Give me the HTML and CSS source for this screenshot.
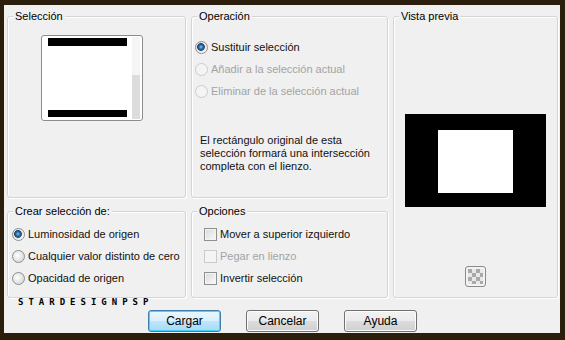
FILE: index.html
```html
<!DOCTYPE html>
<html lang="es">
<head>
    <meta charset="UTF-8">
    <title>Cargar selección desde canal alfa</title>
    <link rel="stylesheet" href="styles.css">
</head>
<body>
    <div class="dialog">
        <div class="groups">
            <fieldset class="box sel">
                <legend>Selección</legend>
                <div class="thumb">
                    <div class="thumb-img">
                        <div class="bar top"></div>
                        <div class="bar bottom"></div>
                    </div>
                    <div class="scroll"><div class="grip"></div></div>
                </div>
            </fieldset>

            <fieldset class="box op">
                <legend>Operación</legend>
                <div class="rows">
                    <label class="row"><span class="radio on"></span>Sustituir selección</label>
                    <label class="row off"><span class="radio"></span>Añadir a la selección actual</label>
                    <label class="row off"><span class="radio"></span>Eliminar de la selección actual</label>
                </div>
                <p class="note">El rectángulo original de esta selección formará una intersección completa con el lienzo.</p>
            </fieldset>

            <fieldset class="box preview">
                <legend>Vista previa</legend>
                <div class="canvas"><div class="inner"></div></div>
                <div class="checker">
                    <svg width="15" height="15" viewBox="0 0 15 15">
                        <rect width="15" height="15" fill="#e8e8e8"/>
                        <g fill="#a9a9a9">
                            <rect x="0" y="0" width="4" height="4"/><rect x="8" y="0" width="4" height="4"/>
                            <rect x="4" y="4" width="4" height="4"/><rect x="12" y="4" width="3" height="4"/>
                            <rect x="0" y="8" width="4" height="4"/><rect x="8" y="8" width="4" height="4"/>
                            <rect x="4" y="12" width="4" height="3"/><rect x="12" y="12" width="3" height="3"/>
                        </g>
                    </svg>
                </div>
            </fieldset>

            <fieldset class="box crear">
                <legend>Crear selección de:</legend>
                <div class="rows">
                    <label class="row"><span class="radio on"></span>Luminosidad de origen</label>
                    <label class="row"><span class="radio"></span>Cualquier valor distinto de cero</label>
                    <label class="row"><span class="radio"></span>Opacidad de origen</label>
                </div>
            </fieldset>

            <fieldset class="box opts">
                <legend>Opciones</legend>
                <div class="rows">
                    <label class="row"><span class="check"></span>Mover a superior izquierdo</label>
                    <label class="row off"><span class="check"></span>Pegar en lienzo</label>
                    <label class="row"><span class="check"></span>Invertir selección</label>
                </div>
            </fieldset>
        </div>

        <div class="buttons">
            <button class="btn default">Cargar</button>
            <button class="btn">Cancelar</button>
            <button class="btn">Ayuda</button>
        </div>

        <div class="stamp">STARDESIGNPSP</div>
    </div>
</body>
</html>
```

FILE: styles.css
```css
body {
    margin: 0;
    background: #2b1e0c;
    font-family: "Liberation Sans", Arial, sans-serif;
    font-size: 11px;
    color: #111;
}
.dialog {
    position: relative;
    width: 556px;
    height: 328px;
    margin: 5px 0 0 4px;
    padding: 5px 2px 0 3px;
    box-sizing: border-box;
    background: #f0f0f0;
}
.groups {
    display: grid;
    grid-template-columns: 179px 197px 165px;
    grid-template-rows: 188px 93px;
    column-gap: 5px;
    row-gap: 7px;
}
.box {
    margin: 0;
    padding: 0;
    min-width: 0;
    border: 1px solid #d5d5d5;
    border-radius: 3px;
    box-shadow: inset 1px 1px 0 #fff, 1px 1px 0 #fff;
}
.box legend {
    margin-left: 5px;
    padding: 0 2px;
    line-height: 13px;
    background: #f0f0f0;
    color: #000;
}
.preview {
    grid-column: 3;
    grid-row: 1 / 3;
}

/* thumbnail */
.thumb {
    display: flex;
    width: 100px;
    height: 84px;
    margin: 12px 0 0 33px;
    border: 1px solid #8c8c8c;
    border-radius: 3px;
    background: #fff;
}
.thumb-img {
    display: flex;
    flex-direction: column;
    justify-content: space-between;
    width: 79px;
    margin: 2px 0 3px 6px;
}
.bar {
    height: 8px;
    background: #000;
}
.bar.bottom {
    height: 7px;
}
.scroll {
    display: flex;
    flex-direction: column;
    justify-content: flex-end;
    width: 8px;
    margin: 1px 0 1px 5px;
    background: #f5f5f5;
}
.grip {
    height: 44px;
    background: #dcdcdc;
}

/* radios & checks */
.rows {
    display: flex;
    flex-direction: column;
}
.row {
    display: flex;
    align-items: center;
    height: 22px;
    gap: 3px;
    white-space: nowrap;
}
.row.off {
    color: #a3a3a3;
}
.op .rows {
    margin-top: 13px;
    padding-left: 3px;
}
.crear .rows {
    margin-top: 5px;
    padding-left: 4px;
}
.opts .rows {
    margin-top: 5px;
    padding-left: 12px;
}
.radio {
    width: 11px;
    height: 11px;
    border: 1px solid #8e8f8f;
    border-radius: 50%;
    background: radial-gradient(circle at 40% 40%, #fff 0, #dedede 6px);
    flex: none;
}
.radio.on {
    background: radial-gradient(circle at 45% 45%, #8fc3ea 0, #2b6ea7 2px, #17466f 3.5px, #e2e2e2 4.2px, #fafafa 6px);
}
.off .radio {
    border-color: #cbcbcb;
    background: #f4f4f4;
}
.check {
    width: 11px;
    height: 11px;
    border: 1px solid #8e8f8f;
    background: linear-gradient(135deg, #d8d8d8, #fbfbfb);
    box-shadow: inset 0 0 0 1px #f4f4f4;
    flex: none;
}
.off .check {
    border-color: #cbcbcb;
    background: #f4f4f4;
}
.note {
    margin: 32px 0 0 8px;
    line-height: 13px;
    width: 172px;
}

/* preview */
.canvas {
    width: 75px;
    height: 63px;
    margin: 91px auto 0;
    padding: 16px 33px 14px;
    background: #000;
}
.inner {
    width: 100%;
    height: 100%;
    background: #fff;
}
.checker {
    display: flex;
    align-items: center;
    justify-content: center;
    width: 19px;
    height: 19px;
    margin: 59px auto 0;
    border: 1px solid #8a8a8a;
    border-radius: 3px;
    background: #f3f3f3;
}

/* buttons */
.buttons {
    display: flex;
    justify-content: center;
    gap: 25px;
    margin-top: 12px;
}
.btn {
    width: 73px;
    height: 22px;
    padding: 0;
    border: 1px solid #707070;
    border-radius: 3px;
    font: inherit;
    font-size: 12px;
    color: #000;
    background: linear-gradient(#f2f2f2 0, #ebebeb 50%, #dddddd 50%, #cfcfcf 100%);
    box-shadow: inset 0 0 0 1px #fcfcfc;
}
.btn.default {
    border-color: #3c7fb1;
    background: linear-gradient(#eaf6fd 0, #d9f0fc 50%, #bee6fd 50%, #a7d9f5 100%);
    box-shadow: inset 0 0 0 1px #48d2fc;
}

.stamp {
    position: absolute;
    left: 14px;
    top: 292px;
    font-family: "DejaVu Sans Mono", monospace;
    font-weight: bold;
    font-size: 9px;
    letter-spacing: 5px;
    color: #000;
}
```
